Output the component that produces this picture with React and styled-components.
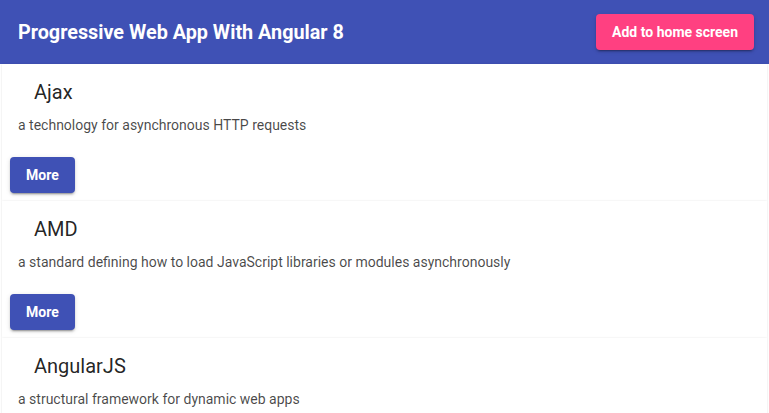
import React from "react";
import styled, { createGlobalStyle } from "styled-components";

const Global = createGlobalStyle`
  html, body { margin: 0; padding: 0; background: #fff; }
  body { font-family: Roboto, "Liberation Sans", sans-serif; overflow: hidden; }
`;

const Toolbar = styled.header`
  display: flex;
  align-items: center;
  justify-content: space-between;
  height: 64px;
  padding: 0 15px 0 18px;
  background: #3f51b5;
  color: #fff;
`;

const Title = styled.h1`
  margin: 0;
  font-size: 19.8px;
  font-weight: 700;
  letter-spacing: 0;
`;

const RaisedButton = styled.button`
  height: 36px;
  min-width: 64px;
  padding: 0 16px;
  border: none;
  border-radius: 4px;
  background: ${(p) => (p.$accent ? "#ff4081" : "#3f51b5")};
  color: #fff;
  font-family: Roboto, "Liberation Sans", sans-serif;
  font-size: 14px;
  font-weight: 700;
  line-height: 36px;
  box-shadow: 0 3px 1px -2px rgba(0, 0, 0, 0.2), 0 2px 2px 0 rgba(0, 0, 0, 0.14),
    0 1px 5px 0 rgba(0, 0, 0, 0.12);
  cursor: pointer;
`;

const List = styled.main`
  display: flex;
  flex-direction: column;
  padding: 0 2px;
`;

const Card = styled.section`
  display: flex;
  flex-direction: column;
  align-items: flex-start;
  padding: 16px 16px 8px;
  background: #fff;
  box-shadow: 0 1px 1px 0 rgba(0, 0, 0, 0.06), 0 0 2px 0 rgba(0, 0, 0, 0.1);
`;

const CardTitle = styled.h2`
  margin: 0 0 11px 16px;
  font-size: 20px;
  font-weight: 400;
  line-height: 24px;
  color: rgba(0, 0, 0, 0.87);
`;

const CardText = styled.p`
  margin: 0;
  font-size: 14px;
  line-height: 20px;
  color: rgba(0, 0, 0, 0.72);
`;

const Actions = styled.div`
  display: flex;
  margin: 22px 0 0 -8px;
`;

const items = [
  { title: "Ajax", text: "a technology for asynchronous HTTP requests" },
  {
    title: "AMD",
    text: "a standard defining how to load JavaScript libraries or modules asynchronously",
  },
  { title: "AngularJS", text: "a structural framework for dynamic web apps" },
];

export default function App() {
  return (
    <>
      <Global />
      <Toolbar>
        <Title>Progressive Web App With Angular 8</Title>
        <RaisedButton $accent>Add to home screen</RaisedButton>
      </Toolbar>
      <List>
        {items.map((it) => (
          <Card key={it.title}>
            <CardTitle>{it.title}</CardTitle>
            <CardText>{it.text}</CardText>
            <Actions>
              <RaisedButton>More</RaisedButton>
            </Actions>
          </Card>
        ))}
      </List>
    </>
  );
}
